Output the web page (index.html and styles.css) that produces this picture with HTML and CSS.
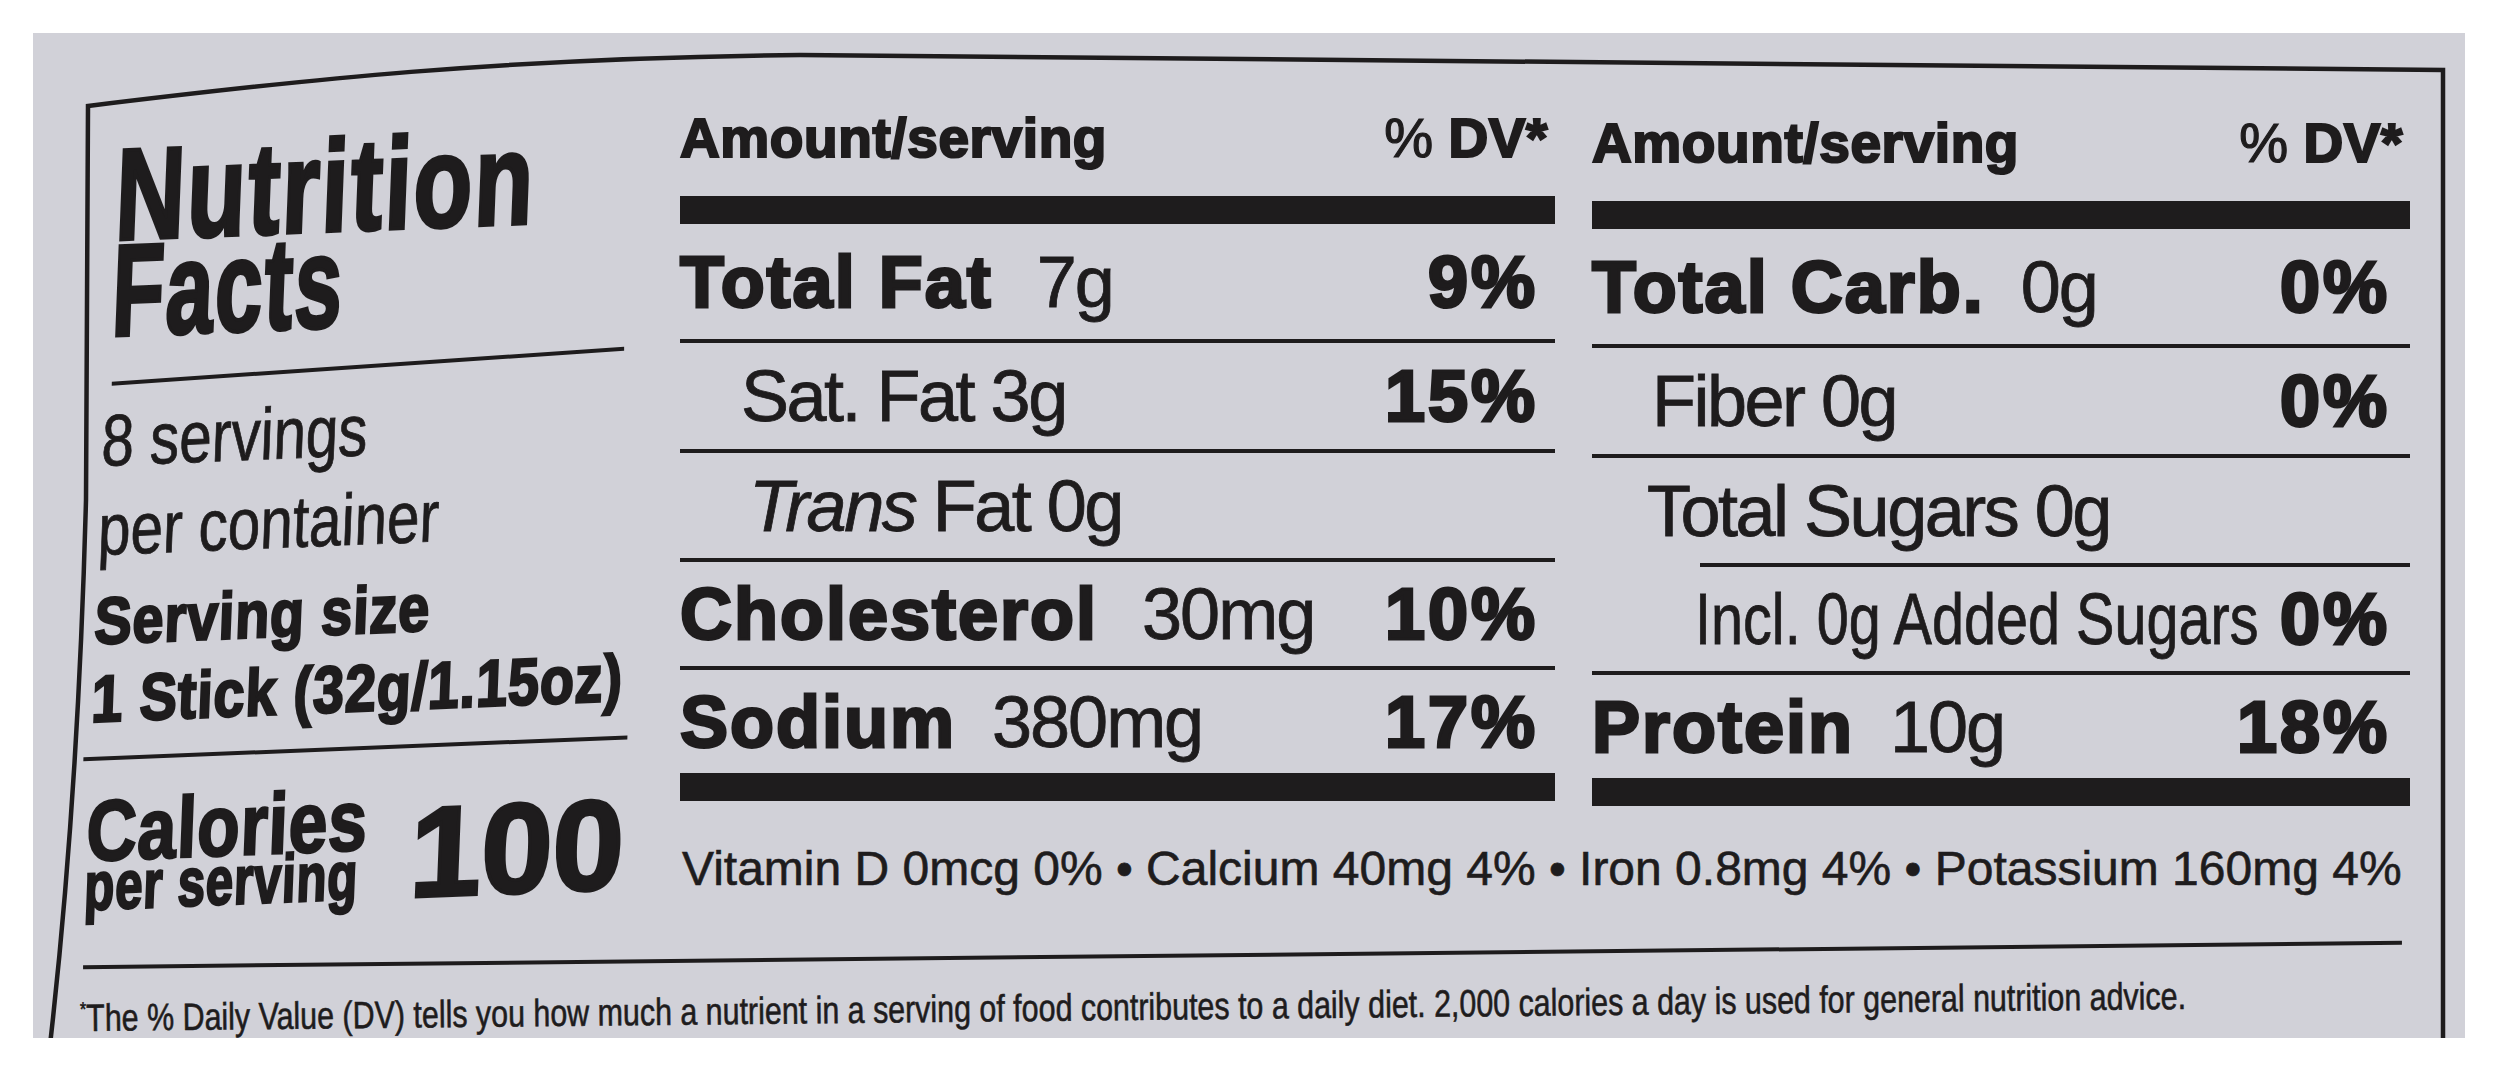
FILE: index.html
```html
<!DOCTYPE html>
<html lang="en">
<head>
<meta charset="utf-8">
<title>Nutrition Facts</title>
<link rel="stylesheet" href="styles.css">
</head>
<body>
<div class="photo">
  <svg class="frame" width="2432" height="1005" viewBox="0 0 2432 1005" aria-hidden="true">
    <path d="M17 1012 Q45 767 53 467 L55 73 C267 47 467 25 767 22 L2410 37 L2410 1012" fill="none" stroke="#1e1c1d" stroke-width="4.5" stroke-linejoin="miter"/>
  </svg>
  <div class="label">
    <div class="left">
      <div class="title blk">
        <span class="sq t1">Nutrition</span>
        <span class="sq t2">Facts</span>
      </div>
      <div class="rule rule-title"></div>
      <div class="servings">
        <span class="sq sv">8 servings</span>
        <span class="sq sv">per container</span>
      </div>
      <div class="size blk">
        <span class="sq sz">Serving size</span>
        <span class="sq sz">1 Stick (32g/1.15oz)</span>
      </div>
      <div class="rule rule-size"></div>
      <div class="cal">
        <div class="cal-text blk">
          <span class="sq ca">Calories</span>
          <span class="sq ps">per serving</span>
        </div>
        <div class="cal-num blk">100</div>
      </div>
    </div>

    <div class="col mid">
      <div class="head"><span class="hb">Amount/serving</span><span class="dv"><span class="pc">%</span> <span class="hb">DV*</span></span></div>
      <div class="bar"></div>
      <div class="row r1"><span><span class="b">Total Fat</span><span class="amt">7g</span></span><span class="pct">9%</span></div>
      <div class="row r2 ind-sat"><span class="reg">Sat. Fat 3g</span><span class="pct">15%</span></div>
      <div class="row r3 ind-trans"><span class="reg"><i>Trans</i> Fat 0g</span></div>
      <div class="row r4"><span><span class="b">Cholesterol</span><span class="amt">30mg</span></span><span class="pct">10%</span></div>
      <div class="row r5"><span><span class="b">Sodium</span><span class="amt amt-s">380mg</span></span><span class="pct">17%</span></div>
      <div class="bar"></div>
    </div>

    <div class="col right">
      <div class="head"><span class="hb">Amount/serving</span><span class="dv"><span class="pc">%</span> <span class="hb">DV*</span></span></div>
      <div class="bar"></div>
      <div class="row r1"><span><span class="b">Total Carb.</span><span class="amt amt-s">0g</span></span><span class="pct">0%</span></div>
      <div class="row r2 ind-fib"><span class="reg">Fiber 0g</span><span class="pct">0%</span></div>
      <div class="row r3 ind-sug sug"><span class="reg">Total Sugars 0g</span></div>
      <div class="row r4 ind-incl"><span class="incl"><span class="incl-in">Incl. 0g Added Sugars</span></span><span class="pct">0%</span></div>
      <div class="row r5"><span><span class="b">Protein</span><span class="amt amt-s">10g</span></span><span class="pct">18%</span></div>
      <div class="bar"></div>
    </div>

    <div class="vits">Vitamin D 0mcg 0% &bull; Calcium 40mg 4% &bull; Iron 0.8mg 4% &bull; Potassium 160mg 4%</div>
    <div class="bottom-rule"></div>
    <div class="foot"><sup class="ast">*</sup>The % Daily Value (DV) tells you how much a nutrient in a serving of food contributes to a daily diet. 2,000 calories a day is used for general nutrition advice.</div>
  </div>
</div>
</body>
</html>
```

FILE: styles.css
```css
html, body {
  margin: 0;
  padding: 0;
  background: #ffffff;
}

body {
  font-family: "Liberation Sans", Arial, sans-serif;
  color: #1e1c1d;
}

.photo {
  position: relative;
  margin: 33px 0 0 33px;
  width: 2432px;
  height: 1005px;
  background: #d1d1d8;
  overflow: hidden;
}

/* printed outer frame of the label (curved in the photo) */
.frame {
  position: absolute;
  left: 0;
  top: 0;
  pointer-events: none;
}

.label {
  margin: 55px 0 0 37px;
  width: 2373px;
  box-sizing: border-box;
  border: 4px solid transparent;
  border-bottom: none;
  padding: 0 29px 0 41px;
  display: grid;
  grid-template-columns: 528px 875px 818px;
  grid-template-rows: 714px 107px auto auto;
  column-gap: 37px;
  height: 1100px;
  align-content: start;
}

/* ---------- left column ---------- */
.left {
  grid-column: 1;
  grid-row: 1 / 3;
  white-space: nowrap;
  transform: skew(-2.2deg, -2.3deg);
  transform-origin: 0 0;
}

.sq {
  display: block;
  width: max-content;
  transform-origin: 0 50%;
}

.blk {
  font-weight: 700;
  -webkit-text-stroke: 2.5px #1e1c1d;
  letter-spacing: 1px;
}

.title {
  margin: 55px 0 0 5px;
  font-size: 130px;
  line-height: 96px;
  letter-spacing: 3px;
  -webkit-text-stroke: 3.8px #1e1c1d;
}

.t1 { transform: scaleX(0.738); }
.t2 { transform: scaleX(0.654); }

.rule {
  height: 4px;
  background: #1e1c1d;
}

.rule-title {
  margin-top: 43px;
  margin-left: 8px;
  width: 512px;
  transform: rotate(-1.6deg);
  transform-origin: 0 50%;
}

.servings {
  margin-top: 10px;
  font-size: 73px;
  line-height: 89px;
  -webkit-text-stroke: 0.8px #1e1c1d;
}

.sv { transform: scaleX(0.8); }

.size {
  margin-top: 8px;
  font-size: 66px;
  line-height: 78px;
}

.sz { transform: scaleX(0.845); }

.rule-size {
  margin-top: 19px;
  margin-left: -6px;
  width: 544px;
}

.cal {
  margin-top: 40px;
  display: flex;
  align-items: last baseline;
}

.cal-text {
  width: 282px;
  flex: none;
}

.ca {
  font-size: 86px;
  line-height: 60px;
  transform: scaleX(0.81);
}

.ps {
  font-size: 68px;
  line-height: 51px;
  transform: scaleX(0.725);
}

.cal-num {
  margin-left: 43px;
  font-size: 128px;
  line-height: 1;
  letter-spacing: 0;
  -webkit-text-stroke: 3.5px #1e1c1d;
}

/* ---------- nutrient columns ---------- */
.col {
  display: flex;
  flex-direction: column;
}

.mid { grid-column: 2; grid-row: 1; }
.right { grid-column: 3; grid-row: 1; padding-top: 5px; }

.head {
  height: 104px;
  flex: none;
  box-sizing: border-box;
  padding: 0 7px 12px 0;
  display: flex;
  justify-content: space-between;
  align-items: center;
  font-size: 55px;
  line-height: 1;
}

.hb {
  font-weight: 700;
  -webkit-text-stroke: 2.2px #1e1c1d;
  letter-spacing: 0.6px;
}

.pc {
  -webkit-text-stroke: 1.2px #1e1c1d;
}

.b {
  font-weight: 700;
  -webkit-text-stroke: 2.8px #1e1c1d;
  letter-spacing: 2px;
}

.bar {
  height: 28px;
  flex: none;
  background: #1e1c1d;
}

.row {
  flex: none;
  box-sizing: border-box;
  display: flex;
  justify-content: space-between;
  align-items: center;
  border-bottom: 4px solid #1e1c1d;
  font-size: 72px;
  line-height: 1;
  white-space: nowrap;
  padding-right: 17px;
}

.right .row { padding-right: 20px; }

.r1 { height: 119px; }
.r2 { height: 110px; }
.r3 { height: 109px; }
.r4 { height: 108px; }
.r5 { height: 103px; border-bottom: none; }

.ind-sat { padding-left: 61px; }
.ind-trans { padding-left: 69px; }
.ind-fib { padding-left: 60px; }
.ind-sug { padding-left: 55px; }
.ind-incl { padding-left: 103px; }

.sug {
  border-bottom: none;
  padding-bottom: 4px;
  background: linear-gradient(#1e1c1d, #1e1c1d) right bottom / calc(100% - 108px) 4px no-repeat;
}

.reg {
  letter-spacing: -2.5px;
  -webkit-text-stroke: 0.8px #1e1c1d;
}

.amt {
  margin-left: 44px;
  letter-spacing: -2px;
  -webkit-text-stroke: 0.8px #1e1c1d;
}

.amt-s { margin-left: 36px; }

.pct {
  font-weight: 700;
  -webkit-text-stroke: 3px #1e1c1d;
  letter-spacing: 3px;
}

.incl {
  display: inline-block;
  width: 570px;
}

.incl-in {
  display: inline-block;
  transform: scaleX(0.8);
  transform-origin: 0 50%;
  -webkit-text-stroke: 0.8px #1e1c1d;
}

/* ---------- bottom ---------- */
.vits {
  grid-column: 2 / 4;
  grid-row: 2;
  padding: 39px 0 0 2px;
  font-size: 48px;
  line-height: 1;
  white-space: nowrap;
  -webkit-text-stroke: 0.6px #1e1c1d;
}

.bottom-rule {
  grid-column: 1 / 4;
  grid-row: 3;
  margin: 40px 0 0 -32px;
  width: 2319px;
  height: 4px;
  background: #1e1c1d;
  transform: rotate(-0.6deg);
}

.foot {
  grid-column: 1 / 4;
  grid-row: 4;
  margin: 42px 0 0 -35px;
  width: max-content;
  font-size: 38px;
  line-height: 1;
  white-space: nowrap;
  transform: rotate(-0.6deg) scaleX(0.80);
  transform-origin: 0 50%;
  -webkit-text-stroke: 0.6px #1e1c1d;
}

.ast {
  font-size: 20px;
  vertical-align: 15px;
  line-height: 0;
}
```
